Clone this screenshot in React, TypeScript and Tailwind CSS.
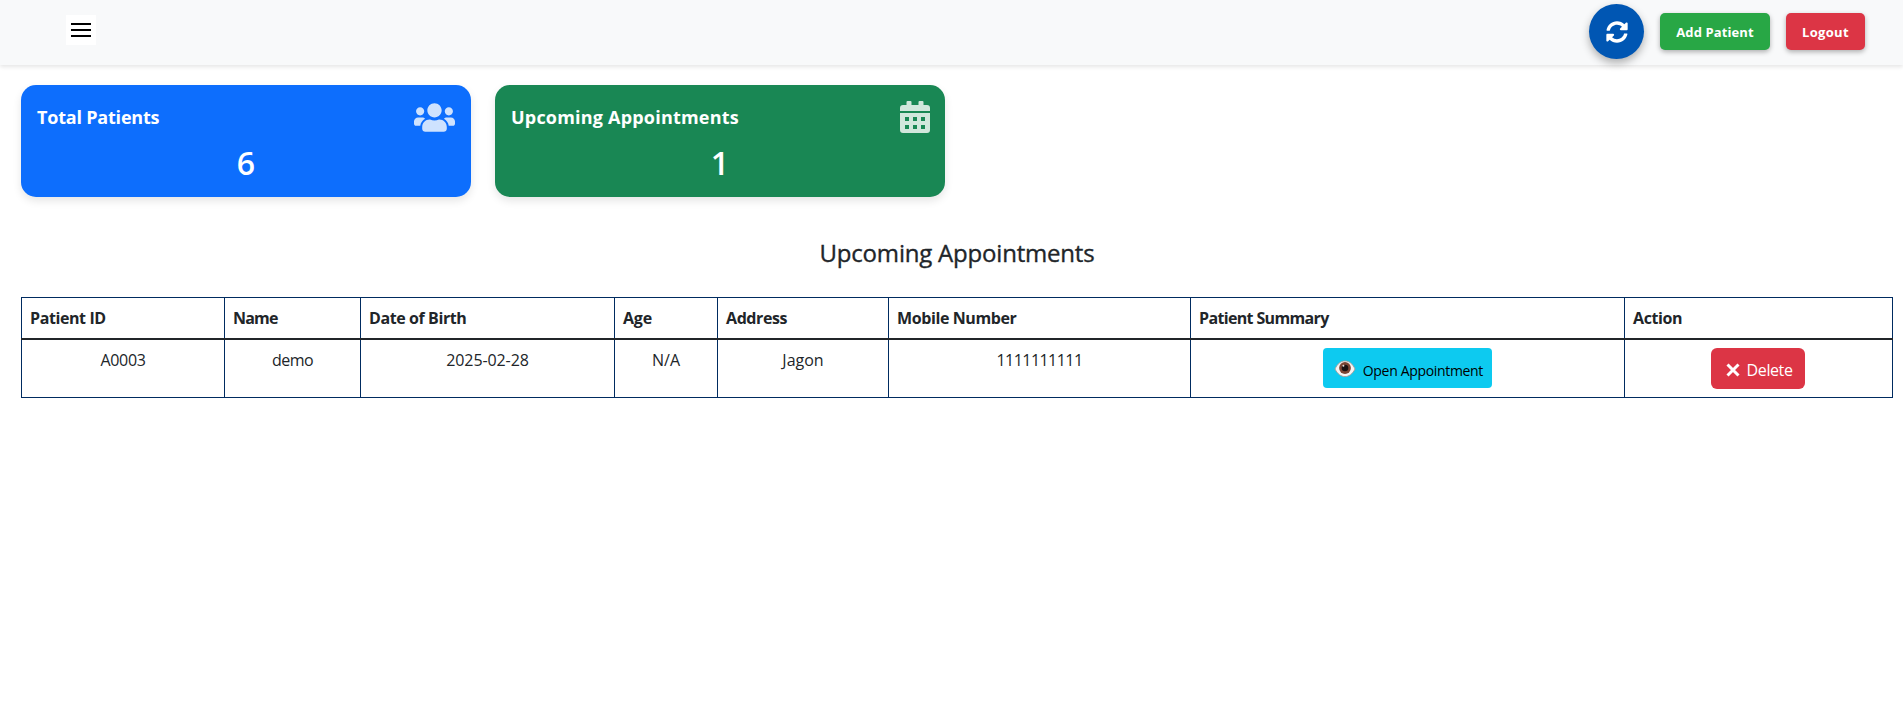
import { FaUsers, FaSyncAlt } from "react-icons/fa";
import type { ReactNode } from "react";

type Column = { title: string; width: string; head: string; cell: string; value: ReactNode };

function Eye() {
  return (
    <svg viewBox="0 0 22 18" className="mt-[2px] mr-[7px] h-[18px] w-[22px]">
      <path d="M1 9C3.500 3.500 7 1 11 1s7.500 2.500 10 8c-2.500 5-6 7.600-10 7.600S3.500 14 1 9z" fill="#f6f4f3" stroke="#a89c97" strokeWidth="0.9" />
      <circle cx="11" cy="8" r="5.900" fill="#7c4533" />
      <circle cx="11" cy="8" r="3.300" fill="#1b1212" />
      <circle cx="9.400" cy="5.800" r="1" fill="#e8dcd8" />
    </svg>
  );
}

function Calendar() {
  return (
    <svg viewBox="0 0 30 32" className="mr-[-1px] h-8 w-[30px] opacity-80" fill="currentColor">
      <path d="M3 4h3.500V1a1 1 0 0 1 1-1h3a1 1 0 0 1 1 1v3h7V1a1 1 0 0 1 1-1h3a1 1 0 0 1 1 1v3H27a3 3 0 0 1 3 3v3H0V7a3 3 0 0 1 3-3z" />
      <path
        fillRule="evenodd"
        d="M0 12h30v17a3 3 0 0 1-3 3H3a3 3 0 0 1-3-3zM5 16v4h4v-4zM13 16v4h4v-4zM21 16v4h4v-4zM5 24v4h4v-4zM13 24v4h4v-4zM21 24v4h4v-4z"
      />
    </svg>
  );
}

const columns: Column[] = [
  { title: "Patient ID", width: "w-[203px]", head: "tracking-[-0.4px]", cell: "tracking-[-0.3px]", value: "A0003" },
  { title: "Name", width: "w-[136px]", head: "tracking-[-0.8px]", cell: "tracking-[-0.5px]", value: "demo" },
  { title: "Date of Birth", width: "w-[254px]", head: "tracking-[-0.4px]", cell: "tracking-[-0.1px]", value: "2025-02-28" },
  { title: "Age", width: "w-[103px]", head: "tracking-[-0.2px]", cell: "", value: "N/A" },
  { title: "Address", width: "w-[171px]", head: "tracking-[-0.4px]", cell: "", value: "Jagon" },
  { title: "Mobile Number", width: "w-[302px]", head: "tracking-[-0.4px]", cell: "tracking-[-0.55px]", value: "1111111111" },
  {
    title: "Patient Summary",
    width: "w-[434px]",
    head: "tracking-[-0.65px]",
    cell: "",
    value: (
      <button className="inline-flex h-10 w-[169px] items-center justify-end rounded-[4px] bg-[#0dcaf0] pr-[9px] text-[14px] text-black">
        <Eye />
        <span className="mt-[6px] tracking-[-0.33px]">Open Appointment</span>
      </button>
    ),
  },
  {
    title: "Action",
    width: "w-[268px]",
    head: "tracking-[-0.4px]",
    cell: "",
    value: (
      <button className="mr-[2px] inline-flex h-[41px] w-[94px] items-center justify-end rounded-[6px] bg-[#dc3545] pr-3 text-[16px] text-white">
        <svg viewBox="0 0 14 14" className="mt-[3px] mr-[7px] h-[14px] w-[14px]" stroke="#fff" strokeWidth="3">
          <path d="M1.500 1.500L12.500 12.500M12.500 1.500L1.500 12.500" />
        </svg>
        <span className="mt-[3px] tracking-[-0.4px]">Delete</span>
      </button>
    ),
  },
];

type StatCardProps = { title: string; value: string; color: string; spacing: string; icon: ReactNode };

function StatCard({ title, value, color, spacing, icon }: StatCardProps) {
  return (
    <div className={`h-28 w-[450px] rounded-[15px] px-4 pt-4 text-white shadow-[0_4px_8px_rgba(0,0,0,0.1)] ${color}`}>
      <div className="flex h-8 items-center justify-between">
        <h5 className={`text-[18px] font-bold ${spacing}`}>{title}</h5>
        {icon}
      </div>
      <p className="mt-[7px] text-center text-[32px] leading-[46px] font-semibold">{value}</p>
    </div>
  );
}

export default function App() {
  return (
    <div className="min-h-[713px] bg-white font-['Open_Sans','Noto_Sans',sans-serif] text-[#212529]">
      <header className="flex h-[65px] items-center justify-between bg-[#f8f9fa] pr-[38px] pl-[66px] shadow-[0_2px_4px_rgba(0,0,0,0.1)]">
        <button className="-mt-[5px] flex h-[30px] w-[30px] flex-col items-center justify-center gap-1 bg-white">
          <span className="h-[2px] w-5 bg-black" />
          <span className="h-[2px] w-5 bg-black" />
          <span className="h-[2px] w-5 bg-black" />
        </button>
        <div className="-mt-[2px] flex items-center gap-4 text-[13px] font-bold text-white">
          <button className="flex h-[55px] w-[55px] items-center justify-center rounded-full bg-[#0056b3] shadow-[0_4px_8px_rgba(0,0,0,0.3)]">
            <FaSyncAlt size={22} />
          </button>
          <button className="h-[37px] w-[110px] rounded-[5px] bg-[#28a745] pt-[2px] tracking-[0.1px] shadow-[0_2px_5px_rgba(0,0,0,0.3)]">
            Add Patient
          </button>
          <button className="h-[37px] w-[79px] rounded-[5px] bg-[#dc3545] pt-[2px] tracking-[0.3px] shadow-[0_2px_5px_rgba(0,0,0,0.3)]">
            Logout
          </button>
        </div>
      </header>
      <main className="pt-5 pr-[10px] pl-[21px]">
        <section className="flex gap-6">
          <StatCard
            title="Total Patients"
            value="6"
            color="bg-[#0d6efd]"
            spacing="tracking-[-0.2px]"
            icon={<FaUsers size={41} className="opacity-80" />}
          />
          <StatCard
            title="Upcoming Appointments"
            value="1"
            color="bg-[#198754]"
            spacing="tracking-[0.2px]"
            icon={<Calendar />}
          />
        </section>
        <h4 className="mt-10 text-center text-[24px] leading-8 font-medium tracking-[-0.2px] [-webkit-text-stroke:0.35px_#212529]">
          Upcoming Appointments
        </h4>
        <table className="mt-7 w-[1872px] table-fixed border-collapse border border-[#002b60] text-[16px] leading-6">
          <thead>
            <tr className="h-[41px] border-b-2 border-[#212529]">
              {columns.map((c) => (
                <th key={c.title} className={`border-x border-[#002b60] px-2 pt-[1px] text-left font-bold ${c.width} ${c.head}`}>
                  {c.title}
                </th>
              ))}
            </tr>
          </thead>
          <tbody>
            <tr className="h-[59px]">
              {columns.map((c) => (
                <td key={c.title} className={`border-x border-[#002b60] px-2 pt-2 pb-1 text-center align-top ${c.cell}`}>
                  {c.value}
                </td>
              ))}
            </tr>
          </tbody>
        </table>
      </main>
    </div>
  );
}
